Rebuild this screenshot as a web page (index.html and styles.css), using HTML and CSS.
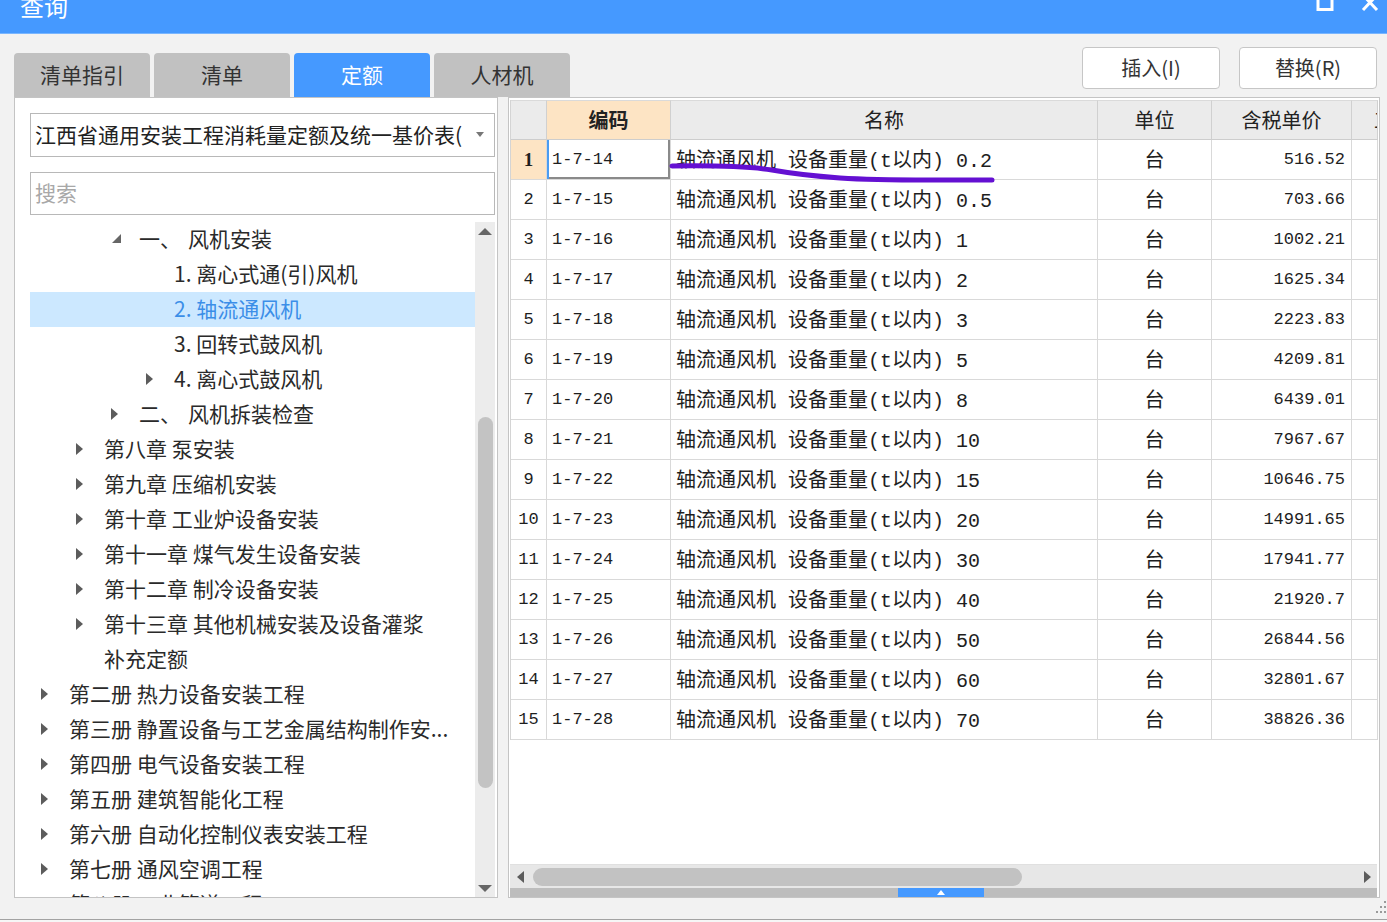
FILE: index.html
```html
<!DOCTYPE html>
<html lang="zh-CN">
<head>
<meta charset="utf-8">
<title>查询</title>
<link rel="stylesheet" href="styles.css">
</head>
<body>
<header class="titlebar">
  <span class="title">查询</span>
  <div class="win-ctrls">
    <svg class="ico-max" width="18" height="18" viewBox="0 0 18 18"><rect x="2" y="1.5" width="14" height="14" fill="none" stroke="#fff" stroke-width="3"/></svg>
    <svg class="ico-close" width="18" height="18" viewBox="0 0 18 18"><path d="M2 1 L16 16 M16 1 L2 16" stroke="#fff" stroke-width="3" fill="none"/></svg>
  </div>
</header>

<main class="content">
  <section class="left">
    <nav class="tabs">
      <div class="tab">清单指引</div>
      <div class="tab">清单</div>
      <div class="tab active">定额</div>
      <div class="tab">人材机</div>
    </nav>
    <div class="panel left-panel">
      <div class="select"><span class="select-text">江西省通用安装工程消耗量定额及统一基价表(</span><i class="caret"></i></div>
      <div class="search">搜索</div>
      <div class="tree-wrap">
        <ul class="tree">
          <li class="row l2"><i class="tw open"></i><span>一、</span><span class="gap">风机安装</span></li>
          <li class="row l3"><i class="tw none"></i><span>1.&nbsp;离心式通(引)风机</span></li>
          <li class="row l3 selected"><i class="tw none"></i><span>2.&nbsp;轴流通风机</span></li>
          <li class="row l3"><i class="tw none"></i><span>3.&nbsp;回转式鼓风机</span></li>
          <li class="row l3"><i class="tw"></i><span>4.&nbsp;离心式鼓风机</span></li>
          <li class="row l2"><i class="tw"></i><span>二、</span><span class="gap">风机拆装检查</span></li>
          <li class="row l1"><i class="tw"></i><span>第八章 泵安装</span></li>
          <li class="row l1"><i class="tw"></i><span>第九章 压缩机安装</span></li>
          <li class="row l1"><i class="tw"></i><span>第十章 工业炉设备安装</span></li>
          <li class="row l1"><i class="tw"></i><span>第十一章 煤气发生设备安装</span></li>
          <li class="row l1"><i class="tw"></i><span>第十二章 制冷设备安装</span></li>
          <li class="row l1"><i class="tw"></i><span>第十三章 其他机械安装及设备灌浆</span></li>
          <li class="row l1"><i class="tw none"></i><span>补充定额</span></li>
          <li class="row l0"><i class="tw"></i><span>第二册 热力设备安装工程</span></li>
          <li class="row l0"><i class="tw"></i><span>第三册 静置设备与工艺金属结构制作安...</span></li>
          <li class="row l0"><i class="tw"></i><span>第四册 电气设备安装工程</span></li>
          <li class="row l0"><i class="tw"></i><span>第五册 建筑智能化工程</span></li>
          <li class="row l0"><i class="tw"></i><span>第六册 自动化控制仪表安装工程</span></li>
          <li class="row l0"><i class="tw"></i><span>第七册 通风空调工程</span></li>
          <li class="row l0"><i class="tw"></i><span>第八册 工业管道工程</span></li>
        </ul>
        <div class="vscroll">
          <div class="vs-btn"><i class="tri-up"></i></div>
          <div class="vs-track"><div class="vs-thumb"></div></div>
          <div class="vs-btn"><i class="tri-down"></i></div>
        </div>
      </div>
    </div>
  </section>

  <section class="right">
    <div class="actions">
      <button class="btn">插入(I)</button>
      <button class="btn">替换(R)</button>
    </div>
    <div class="panel right-panel">
      <div class="grid-wrap">
        <div class="grid">
          <div class="hc"></div>
          <div class="hc hc-key">编码</div>
          <div class="hc">名称</div>
          <div class="hc">单位</div>
          <div class="hc">含税单价</div>
          <div class="hc hc-more">工程</div>

          <div class="c rn rn-cur">1</div><div class="c code cur">1-7-14</div><div class="c name">轴流通风机 设备重量(t以内) 0.2</div><div class="c unit">台</div><div class="c price">516.52</div><div class="c"></div>
          <div class="c rn">2</div><div class="c code">1-7-15</div><div class="c name">轴流通风机 设备重量(t以内) 0.5</div><div class="c unit">台</div><div class="c price">703.66</div><div class="c"></div>
          <div class="c rn">3</div><div class="c code">1-7-16</div><div class="c name">轴流通风机 设备重量(t以内) 1</div><div class="c unit">台</div><div class="c price">1002.21</div><div class="c"></div>
          <div class="c rn">4</div><div class="c code">1-7-17</div><div class="c name">轴流通风机 设备重量(t以内) 2</div><div class="c unit">台</div><div class="c price">1625.34</div><div class="c"></div>
          <div class="c rn">5</div><div class="c code">1-7-18</div><div class="c name">轴流通风机 设备重量(t以内) 3</div><div class="c unit">台</div><div class="c price">2223.83</div><div class="c"></div>
          <div class="c rn">6</div><div class="c code">1-7-19</div><div class="c name">轴流通风机 设备重量(t以内) 5</div><div class="c unit">台</div><div class="c price">4209.81</div><div class="c"></div>
          <div class="c rn">7</div><div class="c code">1-7-20</div><div class="c name">轴流通风机 设备重量(t以内) 8</div><div class="c unit">台</div><div class="c price">6439.01</div><div class="c"></div>
          <div class="c rn">8</div><div class="c code">1-7-21</div><div class="c name">轴流通风机 设备重量(t以内) 10</div><div class="c unit">台</div><div class="c price">7967.67</div><div class="c"></div>
          <div class="c rn">9</div><div class="c code">1-7-22</div><div class="c name">轴流通风机 设备重量(t以内) 15</div><div class="c unit">台</div><div class="c price">10646.75</div><div class="c"></div>
          <div class="c rn">10</div><div class="c code">1-7-23</div><div class="c name">轴流通风机 设备重量(t以内) 20</div><div class="c unit">台</div><div class="c price">14991.65</div><div class="c"></div>
          <div class="c rn">11</div><div class="c code">1-7-24</div><div class="c name">轴流通风机 设备重量(t以内) 30</div><div class="c unit">台</div><div class="c price">17941.77</div><div class="c"></div>
          <div class="c rn">12</div><div class="c code">1-7-25</div><div class="c name">轴流通风机 设备重量(t以内) 40</div><div class="c unit">台</div><div class="c price">21920.7</div><div class="c"></div>
          <div class="c rn">13</div><div class="c code">1-7-26</div><div class="c name">轴流通风机 设备重量(t以内) 50</div><div class="c unit">台</div><div class="c price">26844.56</div><div class="c"></div>
          <div class="c rn">14</div><div class="c code">1-7-27</div><div class="c name">轴流通风机 设备重量(t以内) 60</div><div class="c unit">台</div><div class="c price">32801.67</div><div class="c"></div>
          <div class="c rn">15</div><div class="c code">1-7-28</div><div class="c name">轴流通风机 设备重量(t以内) 70</div><div class="c unit">台</div><div class="c price">38826.36</div><div class="c"></div>
        </div>
        <svg class="ink" width="500" height="100" viewBox="0 0 500 100"><path d="M162 66 Q 230 65 262 70 Q 290 75 330 78 Q 360 80 420 80 L 482 80" fill="none" stroke="#6410d2" stroke-width="5" stroke-linecap="round"/></svg>
      </div>
      <div class="grid-empty"></div>
      <div class="hscroll">
        <div class="hs-btn"><i class="tri-left"></i></div>
        <div class="hs-track"><div class="hs-thumb"></div></div>
        <div class="hs-btn"><i class="tri-right"></i></div>
      </div>
      <div class="splitter"><div class="handle"><i class="tri-small"></i></div></div>
    </div>
  </section>
</main>

<footer class="statusbar"></footer>
<svg class="grip" width="14" height="16" viewBox="0 0 14 16"><g fill="#9a9a9a"><rect x="11" y="2" width="2" height="2"/><rect x="11" y="7" width="2" height="2"/><rect x="7" y="7" width="2" height="2"/><rect x="11" y="12" width="2" height="2"/><rect x="7" y="12" width="2" height="2"/><rect x="3" y="12" width="2" height="2"/></g></svg>
</body>
</html>
```

FILE: styles.css
```css
* { box-sizing: border-box; margin: 0; padding: 0; }
html, body { width: 1387px; height: 922px; overflow: hidden; }
body {
  background: #f2f2f2;
  font-family: "Noto Sans CJK SC", "Microsoft YaHei", sans-serif;
  color: #2e2e2e;
  position: relative;
}

/* title bar */
.titlebar {
  height: 34px;
  background: #4599ff;
  border-bottom: 1px solid #79b6ff;
  display: flex;
  justify-content: space-between;
  align-items: flex-start;
  overflow: hidden;
}
.title {
  color: #fff;
  font-size: 24px;
  line-height: 24px;
  margin: -6px 0 0 20px;
}
.win-ctrls { display: flex; gap: 27px; margin: -6px 8px 0 0; }

/* content */
.content { display: flex; gap: 10px; padding-left: 14px; height: 864px; }
.left { width: 484px; display: flex; flex-direction: column; }
.right { width: 872px; display: flex; flex-direction: column; }

.tabs { height: 63px; display: flex; align-items: flex-end; gap: 4px; }
.tab {
  flex: 0 0 136px;
  height: 44px;
  background: #c1c1c1;
  border-radius: 4px 4px 0 0;
  font-size: 21px;
  line-height: 42px;
  text-align: center;
  color: #333;
}
.tab.active { background: #4599ff; color: #fff; }

.actions { height: 63px; display: flex; justify-content: flex-end; gap: 19px; padding: 13px 3px 0 0; }
.btn {
  width: 138px; height: 42px;
  background: #fff;
  border: 1px solid #c6c6c6;
  border-radius: 4px;
  font-family: "Noto Sans CJK SC", sans-serif;
  font-size: 20px;
  color: #333;
  padding-bottom: 2px;
}

.panel { background: #fff; border: 1px solid #c4c4c4; height: 801px; }

/* left panel */
.left-panel { display: flex; flex-direction: column; padding: 15px 2px 0 15px; }
.select {
  height: 44px;
  border: 1px solid #b8b8b8;
  display: flex; align-items: center; justify-content: space-between;
  padding: 0 10px 2px 4px;
  font-size: 21px;
  color: #222;
  overflow: hidden;
  white-space: nowrap;
}
.select-text { overflow: hidden; width: 428px; }
.caret { width: 0; height: 0; border-left: 4px solid transparent; border-right: 4px solid transparent; border-top: 5px solid #777; }
.search {
  margin-top: 15px;
  height: 43px;
  border: 1px solid #b8b8b8;
  padding-left: 4px;
  font-size: 21px;
  line-height: 39px;
  color: #a8a8a8;
}
.tree-wrap { margin-top: 7px; flex: 1; display: flex; overflow: hidden; }
.tree { list-style: none; width: 445px; overflow: hidden; }
.row {
  height: 35px;
  display: flex; align-items: center;
  padding-bottom: 3px;
  font-size: 21px;
  white-space: nowrap;
  color: #2a2a2a;
}
.row.l0 { padding-left: 11px; }
.row.l1 { padding-left: 46px; }
.row.l2 { padding-left: 81px; }
.row.l3 { padding-left: 116px; }
.row.selected { background: #cce8ff; color: #3b8ee8; }
.gap { margin-left: 7px; }
.tw { flex: 0 0 28px; height: 12px; position: relative; top: 1px; }
.tw::before {
  content: ""; position: absolute; left: 0; top: 0;
  border-top: 6px solid transparent; border-bottom: 6px solid transparent; border-left: 7px solid #5c5c5c;
}
.tw.none::before { display: none; }
.tw.open::before {
  left: 1px; top: 1px;
  border: none;
  border-left: 9px solid transparent;
  border-bottom: 9px solid #666;
}

.vscroll { width: 20px; background: #ececec; display: flex; flex-direction: column; }
.vs-btn { height: 18px; display: flex; align-items: center; justify-content: center; }
.tri-up { border-left: 7px solid transparent; border-right: 7px solid transparent; border-bottom: 7px solid #666; }
.tri-down { border-left: 7px solid transparent; border-right: 7px solid transparent; border-top: 7px solid #666; }
.vs-track { flex: 1; display: flex; justify-content: center; }
.vs-thumb { width: 15px; height: 371px; margin-top: 177px; background: #c3c3c3; border-radius: 8px; }

/* right panel */
.right-panel { display: flex; flex-direction: column; padding: 2px 2px 0 1px; }
.grid-wrap { position: relative; }
.grid {
  display: grid;
  grid-template-columns: 36px 124px 427px 114px 140px 26px;
  grid-auto-rows: 40px;
  border-left: 1px solid #d4d4d4;
}
.hc {
  background: #ebebeb;
  border-right: 1px solid #d0d0d0;
  border-bottom: 1px solid #cdcdcd;
  border-top: 1px solid #dadada;
  font-size: 20px;
  color: #222;
  display: flex; align-items: center; justify-content: center;
  padding-bottom: 2px;
}
.hc-key { background: #fde4c4; font-weight: bold; }
.hc-more { justify-content: flex-start; padding-left: 22px; overflow: hidden; white-space: nowrap; font-size: 20px; }
.c {
  border-right: 1px solid #d9d9d9;
  border-bottom: 1px solid #d9d9d9;
  display: flex; align-items: center;
  white-space: nowrap;
  overflow: hidden;
  color: #1e1e1e;
}
.rn { justify-content: center; font-family: "Liberation Mono", monospace; font-size: 17px; }
.rn-cur { background: #fde4c4; font-family: "Liberation Serif", serif; font-weight: bold; font-size: 19px; }
.code { padding-left: 5px; font-family: "Liberation Mono", monospace; font-size: 17px; }
.cur { box-shadow: inset 2px 0 0 #4a9cf2, inset -2px -2px 0 #8a8a8a; }
.name { padding: 0 0 3px 5px; font-family: "Liberation Mono", "Noto Sans CJK SC", monospace; font-size: 20px; }
.unit { justify-content: center; font-size: 20px; padding-bottom: 3px; }
.price { justify-content: flex-end; padding-right: 6px; font-family: "Liberation Mono", monospace; font-size: 17px; }
.ink { position: absolute; left: 0; top: 0; pointer-events: none; }

.grid-empty { flex: 1; }
.hscroll { height: 24px; background: #e7e7e7; display: flex; align-items: center; border-top: 1px solid #e0e0e0; }
.hs-btn { width: 20px; height: 100%; display: flex; align-items: center; justify-content: center; }
.tri-left { border-top: 6px solid transparent; border-bottom: 6px solid transparent; border-right: 7px solid #5c5c5c; }
.tri-right { border-top: 6px solid transparent; border-bottom: 6px solid transparent; border-left: 7px solid #5c5c5c; }
.hs-track { flex: 1; height: 100%; display: flex; align-items: center; }
.hs-thumb { width: 489px; height: 18px; margin-left: 3px; background: #c2c2c2; border-radius: 9px; }
.splitter { height: 9px; background: #bdbdbd; display: flex; justify-content: center; }
.handle { width: 86px; height: 9px; margin-right: 6px; background: #4599ff; display: flex; align-items: center; justify-content: center; }
.tri-small { border-left: 4px solid transparent; border-right: 4px solid transparent; border-bottom: 5px solid #fff; }

.statusbar { margin-top: 21px; height: 3px; border-top: 1px solid #a3a3a3; background: #f6f6f6; }
.grip { position: absolute; right: 0; top: 899px; }
```
